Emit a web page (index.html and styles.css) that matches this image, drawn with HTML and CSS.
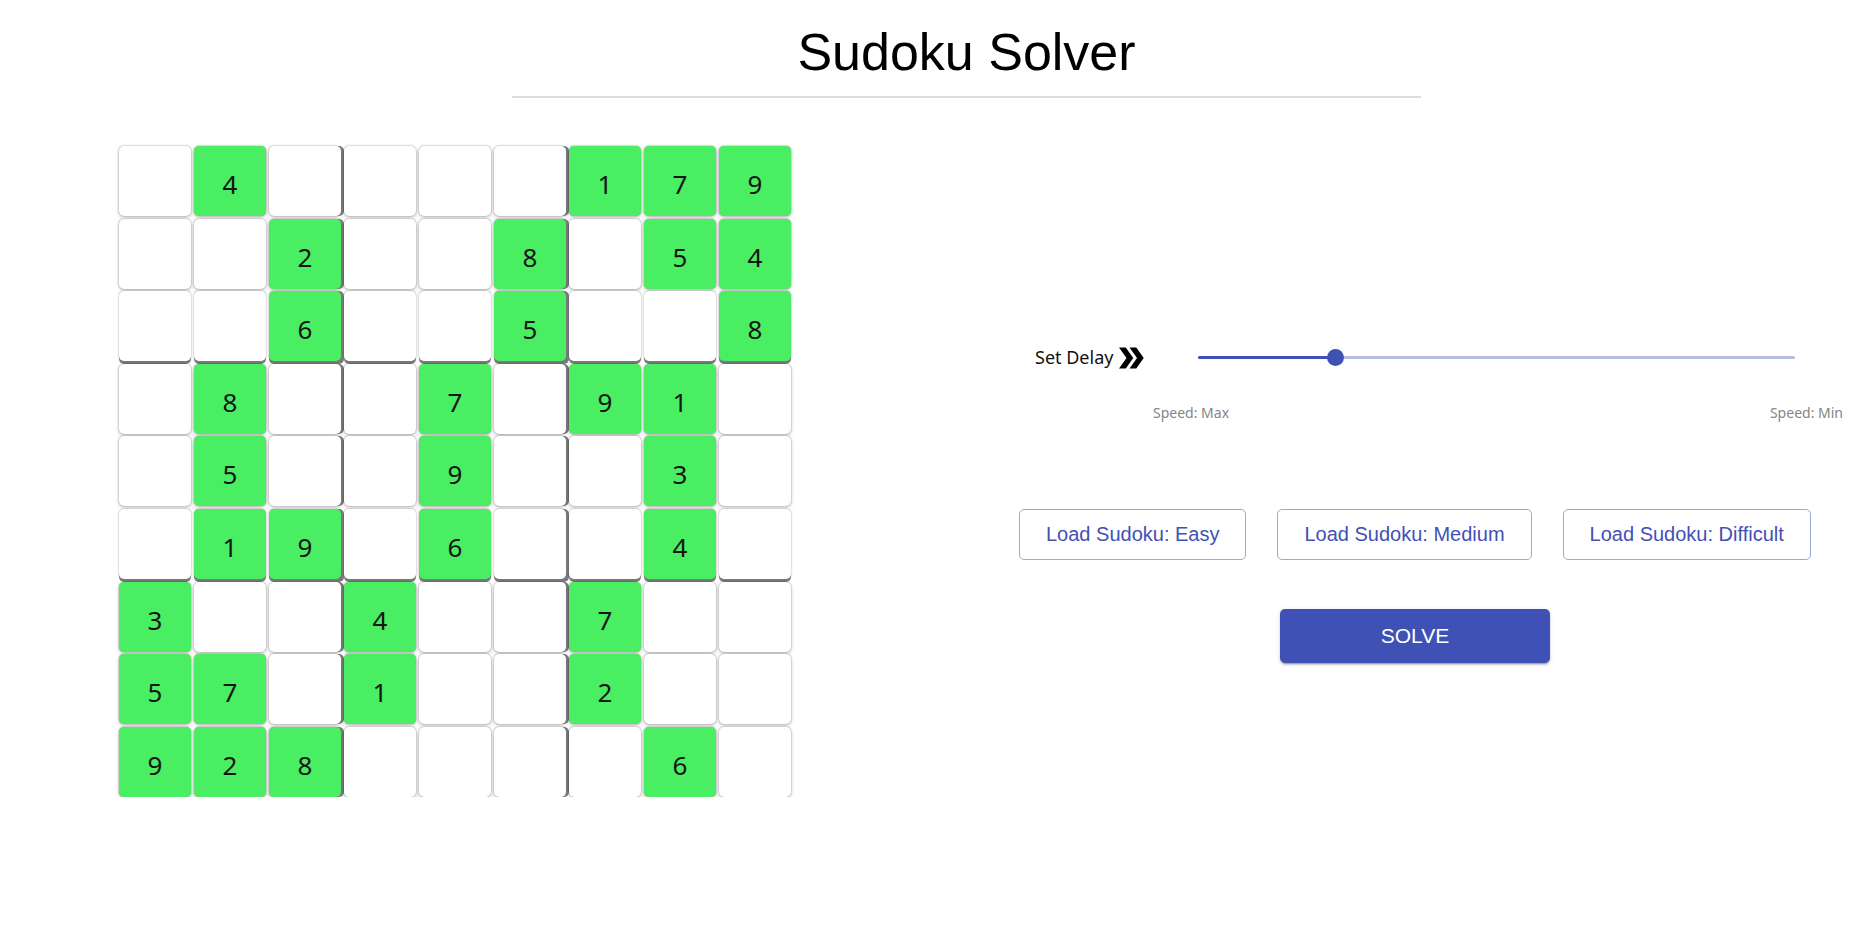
FILE: index.html
```html
<!DOCTYPE html>
<html lang="en">
<head>
<meta charset="utf-8">
<title>Sudoku Solver</title>
<link rel="stylesheet" href="styles.css">
</head>
<body>
<header class="header">
  <h1 class="title">Sudoku Solver</h1>
  <div class="rule"></div>
</header>
<main class="main">
  <section class="board">
    <div class="cell"></div><div class="cell given">4</div><div class="cell br"></div><div class="cell"></div><div class="cell"></div><div class="cell br"></div><div class="cell given">1</div><div class="cell given">7</div><div class="cell given">9</div>
    <div class="cell"></div><div class="cell"></div><div class="cell given br">2</div><div class="cell"></div><div class="cell"></div><div class="cell given br">8</div><div class="cell"></div><div class="cell given">5</div><div class="cell given">4</div>
    <div class="cell bb"></div><div class="cell bb"></div><div class="cell given bb br">6</div><div class="cell bb"></div><div class="cell bb"></div><div class="cell given bb br">5</div><div class="cell bb"></div><div class="cell bb"></div><div class="cell given bb">8</div>
    <div class="cell"></div><div class="cell given">8</div><div class="cell br"></div><div class="cell"></div><div class="cell given">7</div><div class="cell br"></div><div class="cell given">9</div><div class="cell given">1</div><div class="cell"></div>
    <div class="cell"></div><div class="cell given">5</div><div class="cell br"></div><div class="cell"></div><div class="cell given">9</div><div class="cell br"></div><div class="cell"></div><div class="cell given">3</div><div class="cell"></div>
    <div class="cell bb"></div><div class="cell given bb">1</div><div class="cell given bb br">9</div><div class="cell bb"></div><div class="cell given bb">6</div><div class="cell bb br"></div><div class="cell bb"></div><div class="cell given bb">4</div><div class="cell bb"></div>
    <div class="cell given">3</div><div class="cell"></div><div class="cell br"></div><div class="cell given">4</div><div class="cell"></div><div class="cell br"></div><div class="cell given">7</div><div class="cell"></div><div class="cell"></div>
    <div class="cell given">5</div><div class="cell given">7</div><div class="cell br"></div><div class="cell given">1</div><div class="cell"></div><div class="cell br"></div><div class="cell given">2</div><div class="cell"></div><div class="cell"></div>
    <div class="cell given">9</div><div class="cell given">2</div><div class="cell given br">8</div><div class="cell"></div><div class="cell"></div><div class="cell br"></div><div class="cell"></div><div class="cell given">6</div><div class="cell"></div>
  </section>
  <section class="controls">
    <div class="delay-row">
      <span class="delay-label">Set Delay</span>
      <svg class="delay-icon" viewBox="0 0 24 24" width="36" height="36" aria-hidden="true">
        <path d="M15.5 5H11l5 7-5 7h4.5l5-7z"/>
        <path d="M8.5 5H4l5 7-5 7h4.5l5-7z"/>
      </svg>
      <div class="slider">
        <div class="slider-rail"></div>
        <div class="slider-track" style="width: 22.95%"></div>
        <div class="slider-thumb" style="left: 22.95%"></div>
      </div>
    </div>
    <div class="speed-row">
      <span class="speed-label">Speed: Max</span>
      <span class="speed-label">Speed: Min</span>
    </div>
    <div class="load-row">
      <button class="btn-outline">Load Sudoku: Easy</button>
      <button class="btn-outline">Load Sudoku: Medium</button>
      <button class="btn-outline">Load Sudoku: Difficult</button>
    </div>
    <div class="solve-row">
      <button class="btn-solve">SOLVE</button>
    </div>
  </section>
</main>
</body>
</html>
```

FILE: styles.css
```css
* {
  box-sizing: border-box;
}

html, body {
  margin: 0;
  padding: 0;
  background: #ffffff;
  overflow: hidden;
}

body {
  font-family: "Noto Sans", "Open Sans", sans-serif;
  color: #000;
}

.header {
  width: 909px;
  margin-left: 512px;
  padding-top: 23px;
}

.title {
  margin: 0;
  font-family: "Liberation Sans", Arial, sans-serif;
  font-size: 52px;
  font-weight: 400;
  line-height: 58px;
  text-align: center;
  color: #000;
}

.rule {
  margin-top: 15px;
  height: 2px;
  background: #dcdcdc;
}

.main {
  display: flex;
  align-items: flex-start;
  margin-top: 48px;
  padding-left: 119px;
}

.board {
  display: grid;
  grid-template-columns: repeat(9, 72px);
  grid-template-rows: repeat(9, 70px);
  column-gap: 3px;
  row-gap: 2.6px;
  flex: none;
}

.cell {
  display: flex;
  align-items: center;
  justify-content: center;
  padding-top: 6px;
  background: #ffffff;
  border-radius: 5px;
  font-family: "Noto Sans", "Open Sans", sans-serif;
  font-size: 26px;
  font-weight: 400;
  color: #151515;
  box-shadow: 0 0 2px rgba(0, 0, 0, 0.45), 0 2px 4px rgba(0, 0, 0, 0.16);
}

.cell.given {
  background: #49ee62;
}

.cell.br {
  box-shadow: 3px 0 0 #7a7a7a, 0 0 2px rgba(0, 0, 0, 0.45), 0 2px 4px rgba(0, 0, 0, 0.16);
}

.cell.bb {
  box-shadow: 0 3px 0 #7a7a7a, 0 0 2px rgba(0, 0, 0, 0.45);
}

.cell.bb.br {
  box-shadow: 3px 0 0 #7a7a7a, 0 3px 0 #7a7a7a, 3px 3px 0 #7a7a7a, 0 0 2px rgba(0, 0, 0, 0.45);
}

.controls {
  width: 792px;
  margin-left: 228px;
  padding-top: 196px;
  flex: none;
}

.delay-row {
  display: flex;
  align-items: center;
  height: 30px;
  width: 760px;
  margin-left: 16px;
}

.delay-label {
  font-size: 18px;
  color: #111;
}

.delay-icon {
  fill: #000;
  flex: none;
  margin-top: 1px;
}

.slider {
  position: relative;
  margin-left: auto;
  width: 597px;
  height: 17px;
  flex: none;
}

.slider-rail {
  position: absolute;
  left: 0;
  right: 0;
  top: 7px;
  height: 3px;
  background: #b6bde3;
  border-radius: 2px;
}

.slider-track {
  position: absolute;
  left: 0;
  top: 7px;
  height: 3px;
  background: #3f51b5;
  border-radius: 2px;
}

.slider-thumb {
  position: absolute;
  top: 0;
  width: 17px;
  height: 17px;
  margin-left: -8.5px;
  border-radius: 50%;
  background: #3f51b5;
}

.speed-row {
  display: flex;
  justify-content: space-between;
  width: 690px;
  margin-left: 134px;
  margin-top: 32px;
  line-height: 18px;
}

.speed-label {
  font-size: 14px;
  color: #858585;
}

.load-row {
  display: flex;
  gap: 31px;
  margin-top: 87px;
}

.btn-outline {
  height: 51px;
  padding: 0 26px;
  background: #fff;
  border: 1px solid #9ea7dc;
  border-radius: 5px;
  color: #3f51b5;
  font-family: "Liberation Sans", Arial, sans-serif;
  font-size: 20px;
  cursor: pointer;
}

.solve-row {
  display: flex;
  justify-content: center;
  margin-top: 49px;
}

.btn-solve {
  width: 270px;
  height: 54px;
  border: none;
  border-radius: 5px;
  background: #3f51b5;
  color: #fff;
  font-family: "Liberation Sans", Arial, sans-serif;
  font-size: 21px;
  cursor: pointer;
  box-shadow: 0 3px 1px -2px rgba(0, 0, 0, 0.2), 0 2px 2px 0 rgba(0, 0, 0, 0.14), 0 1px 5px 0 rgba(0, 0, 0, 0.12);
}
```
